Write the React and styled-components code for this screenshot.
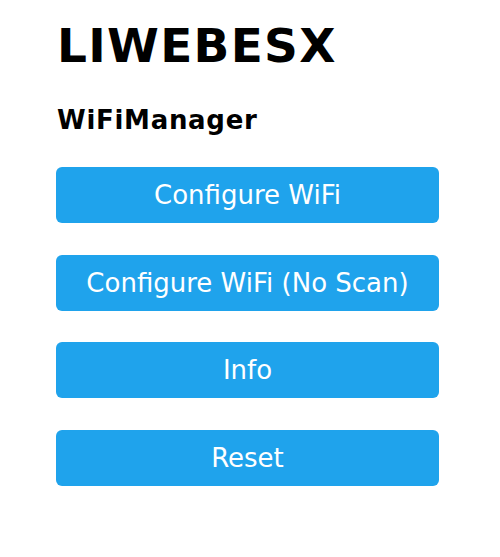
import React from "react";
import styled, { createGlobalStyle } from "styled-components";

const GlobalStyle = createGlobalStyle`
  html, body {
    margin: 0;
    padding: 0;
    background: #fff;
  }
`;

export default function App() {
  const buttons = [
    "Configure WiFi",
    "Configure WiFi (No Scan)",
    "Info",
    "Reset",
  ];
  return (
    <>
      <GlobalStyle />
      <Page>
        <Title>LIWEBESX</Title>
        <SubTitle>WiFiManager</SubTitle>
        <Menu>
          {buttons.map((label) => (
            <Button key={label}>{label}</Button>
          ))}
        </Menu>
      </Page>
    </>
  );
}

const Page = styled.div`
  width: 383px;
  padding: 19px 0 0 56px;
  font-family: "DejaVu Sans", Verdana, sans-serif;
`;

const Title = styled.h1`
  margin: 0;
  font-size: 47px;
  line-height: 54px;
  font-weight: bold;
  letter-spacing: 1.3px;
  color: #000;
  padding-left: 1px;
`;

const SubTitle = styled.h3`
  margin: 32px 0 0;
  font-size: 26px;
  line-height: 30px;
  font-weight: bold;
  letter-spacing: 0.7px;
  color: #000;
  padding-left: 1px;
`;

const Menu = styled.div`
  display: flex;
  flex-direction: column;
  gap: 31.5px;
  margin-top: 32px;
`;

const Button = styled.button`
  display: block;
  width: 100%;
  height: 56px;
  border: 0;
  border-radius: 6px;
  background: #1fa3ec;
  color: #fff;
  font-family: "DejaVu Sans", Verdana, sans-serif;
  font-size: 26px;
  line-height: 56px;
  padding: 0;
  cursor: pointer;
`;
